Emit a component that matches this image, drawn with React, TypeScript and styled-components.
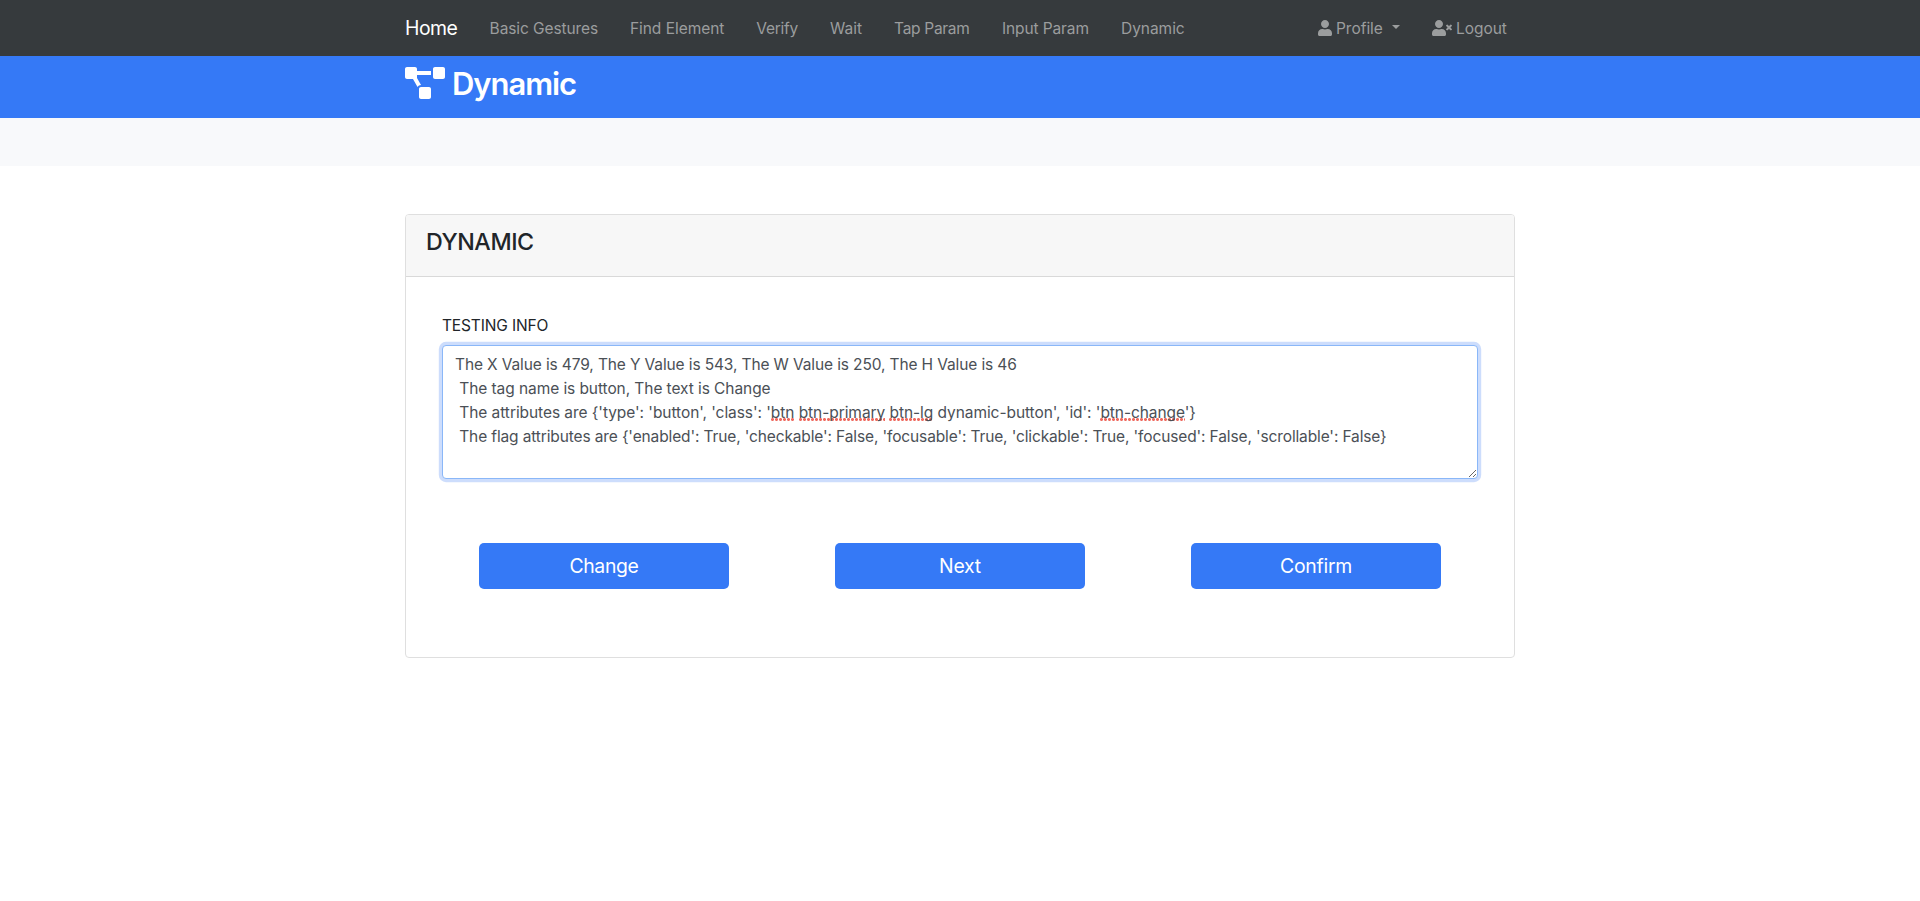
import React from "react";
import styled, { createGlobalStyle } from "styled-components";
import { FaUser, FaUserTimes, FaProjectDiagram } from "react-icons/fa";

const GlobalStyle = createGlobalStyle`
  *, *::before, *::after { box-sizing: border-box; }
  body {
    margin: 0;
    background: #fff;
    color: #212529;
    font-family: Inter, "Liberation Sans", sans-serif;
    font-size: 15.5px;
    font-weight: 400;
    line-height: 24px;
  }
`;

const Container = styled.div`
  width: 1110px;
  margin: 0 auto;
`;

const Navbar = styled.nav`
  height: 56px;
  background: #363a3d;
`;

const NavInner = styled(Container)`
  display: flex;
  align-items: center;
  height: 100%;
`;

const Brand = styled.a`
  width: 52.6px;
  margin-right: 16px;
  color: #fff;
  font-size: 19.4px;
  line-height: 30px;
  letter-spacing: -0.5px;
  white-space: nowrap;
`;

const NavList = styled.ul<{ $end?: boolean }>`
  display: flex;
  margin: 0 ${(p) => (p.$end ? "-8px 0 auto" : "0 0 0")};
  padding: 0;
  list-style: none;
`;

const NavItem = styled.li`
  padding: 0 8px;
`;

const NavLink = styled.a<{ $width: number; $tracking: number }>`
  display: flex;
  align-items: center;
  box-sizing: content-box;
  width: ${(p) => p.$width}px;
  padding: 8px;
  color: #9b9d9e;
  letter-spacing: ${(p) => p.$tracking}px;
  white-space: nowrap;

  svg {
    flex: none;
    margin-right: 4px;
  }
`;

const NavText = styled.span`
  margin: 1px 0 -1px;
`;

const Caret = styled.span`
  margin: 0 0 2px 9px;
  border-top: 4.8px solid;
  border-left: 4.8px solid transparent;
  border-right: 4.8px solid transparent;
`;

const TitleBar = styled.header`
  height: 62px;
  background: #3579f6;
  color: #fff;
`;

const Title = styled.h1`
  display: flex;
  margin: 0;
  padding-top: 8px;
  font-size: 31px;
  font-weight: 600;
  line-height: 40px;
  letter-spacing: -1.05px;

  svg {
    flex: none;
    margin: 3px 7px 0 0;
  }
`;

const SubBar = styled.div`
  height: 48px;
  background: #f8f9fb;
`;

const Card = styled.section`
  display: flex;
  flex-direction: column;
  height: 444px;
  margin-top: 48px;
  border: 1px solid #dfdfdf;
  border-radius: 4px;
`;

const CardHeader = styled.div`
  height: 62px;
  padding: 12px 20px;
  background: #f7f7f7;
  border-bottom: 1px solid #d9d9d9;
  border-radius: 3px 3px 0 0;
`;

const CardTitle = styled.h4`
  margin: 0;
  font-size: 23.25px;
  font-weight: 500;
  line-height: 29px;
  letter-spacing: -0.45px;
`;

const CardBody = styled.div`
  padding: 37px 36px 0;
`;

const Label = styled.label`
  display: block;
  margin-bottom: 7px;
  letter-spacing: -0.14px;
`;

const InfoBox = styled.div`
  height: 134px;
  padding: 7px 12px 5px;
  overflow: auto;
  resize: vertical;
  background: #fff;
  border: 1px solid #8ab7f8;
  border-radius: 4px;
  box-shadow: 0 0 0 3.2px #cdddfc;
  color: #4b5056;
`;

const InfoLine = styled.div<{ $tracking: number }>`
  letter-spacing: ${(p) => p.$tracking}px;
  white-space: pre;
`;

const Misspelled = styled.span`
  background: radial-gradient(circle at 1.5px 1.5px, #ee6a5f 1.2px, transparent 1.7px) 0 calc(100% - 1px) / 4px 3px repeat-x;
`;

const ButtonRow = styled.div`
  display: grid;
  grid-template-columns: repeat(3, 1fr);
  justify-items: center;
  margin: 64px -16px 0;
`;

const Button = styled.button<{ $tracking: number }>`
  width: 250px;
  height: 46px;
  padding: 0;
  border: 0;
  border-radius: 5px;
  background: #3579f6;
  color: #fff;
  font-family: inherit;
  font-weight: 400;
  font-size: 19.4px;
  line-height: 30px;
  letter-spacing: ${(p) => p.$tracking}px;
`;

const links = [
  { label: "Basic Gestures", width: 108.3, tracking: -0.1 },
  { label: "Find Element", width: 94.4, tracking: -0.03 },
  { label: "Verify", width: 41.8, tracking: -0.26 },
  { label: "Wait", width: 32, tracking: -0.02 },
  { label: "Tap Param", width: 75.8, tracking: -0.3 },
  { label: "Input Param", width: 87.2, tracking: -0.1 },
  { label: "Dynamic", width: 64.5, tracking: -0.05 },
];

const buttons = [
  { label: "Change", tracking: -0.33 },
  { label: "Next", tracking: -0.18 },
  { label: "Confirm", tracking: -0.25 },
];

export default function App() {
  return (
    <>
      <GlobalStyle />
      <Navbar>
        <NavInner>
          <Brand>Home</Brand>
          <NavList>
            {links.map((link) => (
              <NavItem key={link.label}>
                <NavLink $width={link.width} $tracking={link.tracking}>
                  <NavText>{link.label}</NavText>
                </NavLink>
              </NavItem>
            ))}
          </NavList>
          <NavList $end>
            <NavItem>
              <NavLink $width={82} $tracking={-0.03}>
                <FaUser style={{ width: 14, height: 16 }} />
                <NavText>Profile</NavText>
                <Caret />
              </NavLink>
            </NavItem>
            <NavItem>
              <NavLink $width={75} $tracking={-0.05}>
                <FaUserTimes style={{ width: 20, height: 16 }} />
                <NavText>Logout</NavText>
              </NavLink>
            </NavItem>
          </NavList>
        </NavInner>
      </Navbar>
      <TitleBar>
        <Container>
          <Title>
            <FaProjectDiagram style={{ width: 40, height: 32 }} />
            Dynamic
          </Title>
        </Container>
      </TitleBar>
      <SubBar />
      <Container>
        <Card>
          <CardHeader>
            <CardTitle>DYNAMIC</CardTitle>
          </CardHeader>
          <CardBody>
            <Label>TESTING INFO</Label>
            <InfoBox role="textbox" aria-multiline="true">
              <InfoLine $tracking={-0.125}>
                The X Value is 479, The Y Value is 543, The W Value is 250, The H Value is 46
              </InfoLine>
              <InfoLine $tracking={-0.078}>{" The tag name is button, The text is Change"}</InfoLine>
              <InfoLine $tracking={-0.064}>
                {" The attributes are {'type': 'button', 'class': '"}
                <Misspelled>btn</Misspelled> <Misspelled>btn-primary</Misspelled> <Misspelled>btn-lg</Misspelled>
                {" dynamic-button', 'id': '"}
                <Misspelled>btn-change</Misspelled>
                {"'}"}
              </InfoLine>
              <InfoLine $tracking={-0.129}>
                {
                  " The flag attributes are {'enabled': True, 'checkable': False, 'focusable': True, 'clickable': True, 'focused': False, 'scrollable': False}"
                }
              </InfoLine>
            </InfoBox>
            <ButtonRow>
              {buttons.map((button) => (
                <Button key={button.label} type="button" $tracking={button.tracking}>
                  {button.label}
                </Button>
              ))}
            </ButtonRow>
          </CardBody>
        </Card>
      </Container>
    </>
  );
}
